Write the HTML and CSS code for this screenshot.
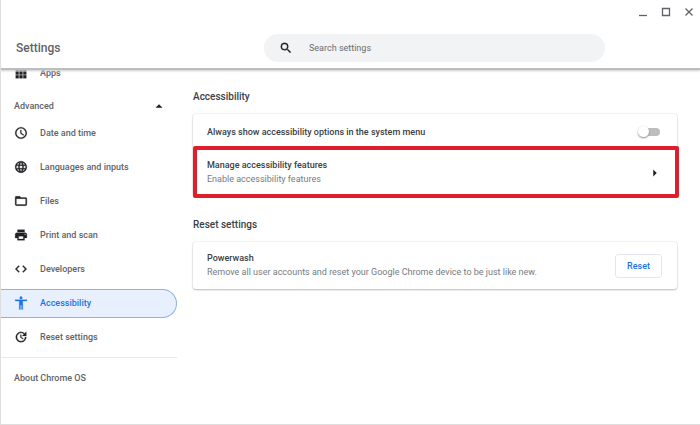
FILE: index.html
```html
<!DOCTYPE html>
<html lang="en">
<head>
<meta charset="utf-8">
<title>Settings</title>
<link rel="stylesheet" href="styles.css">
</head>
<body>
<div class="window">
  <header class="top">
    <div class="controls">
      <button type="button" aria-label="Minimize"><svg viewBox="0 0 10 10"><path d="M1 8.5h8"/></svg></button>
      <button type="button" aria-label="Maximize"><svg viewBox="0 0 10 10"><path d="M1.5 1.5h7v7h-7z"/></svg></button>
      <button type="button" aria-label="Close"><svg viewBox="0 0 10 10"><path d="M1.5 1.5l7 7M8.5 1.5l-7 7"/></svg></button>
    </div>
    <div class="toolbar">
      <h1>Settings</h1>
      <label class="search">
        <svg class="icon" viewBox="0 0 24 24"><path d="M15.5 14h-.79l-.28-.27A6.47 6.47 0 0 0 16 9.5 6.5 6.5 0 1 0 9.5 16c1.61 0 3.09-.59 4.23-1.57l.27.28v.79l5 4.99L20.49 19l-4.99-5zm-6 0a4.5 4.5 0 1 1 0-9 4.5 4.5 0 0 1 0 9z"/></svg>
        <input type="search" placeholder="Search settings" aria-label="Search settings">
      </label>
    </div>
  </header>
  <div class="content">
    <nav class="menu">
      <a class="item" href="#apps"><svg class="icon" viewBox="0 0 24 24"><path d="M3 3h5v5H3zM9.500 3h5v5h-5zM16 3h5v5h-5zM3 9.500h5v5H3zM9.500 9.500h5v5h-5zM16 9.500h5v5h-5zM3 16h5v5H3zM9.500 16h5v5h-5zM16 16h5v5h-5z"/></svg>Apps</a>
      <button class="advanced" type="button">Advanced<svg class="icon arrow" viewBox="0 0 24 24"><path d="M6 15l6-6 6 6z"/></svg></button>
      <a class="item" href="#date"><svg class="icon" viewBox="0 0 24 24"><path d="M12 2a10 10 0 1 0 0 20 10 10 0 0 0 0-20zm0 18a8 8 0 1 1 0-16 8 8 0 0 1 0 16zm.5-13H11v6l5.200 3.200.8-1.300-4.500-2.700z"/></svg>Date and time</a>
      <a class="item" href="#languages"><svg class="icon" viewBox="0 0 24 24"><path d="M11.990 2C6.470 2 2 6.480 2 12s4.470 10 9.990 10C17.520 22 22 17.520 22 12S17.520 2 11.990 2zm6.930 6h-2.950a15.650 15.650 0 0 0-1.380-3.560A8.030 8.030 0 0 1 18.920 8zM12 4.040c.83 1.200 1.480 2.530 1.910 3.960h-3.820c.43-1.430 1.080-2.760 1.910-3.960zM4.260 14C4.100 13.360 4 12.690 4 12s.1-1.360.26-2h3.380c-.08.66-.14 1.320-.14 2s.06 1.340.14 2H4.260zm.82 2h2.950c.32 1.250.78 2.450 1.380 3.560A7.990 7.990 0 0 1 5.080 16zm2.950-8H5.080a7.990 7.990 0 0 1 4.330-3.560A15.650 15.650 0 0 0 8.030 8zM12 19.960c-.83-1.200-1.480-2.530-1.910-3.960h3.820c-.43 1.430-1.080 2.760-1.910 3.960zM14.340 14H9.660c-.09-.66-.16-1.320-.16-2s.07-1.350.16-2h4.680c.09.650.16 1.320.16 2s-.07 1.340-.16 2zm.25 5.560c.6-1.110 1.060-2.310 1.380-3.560h2.950a8.030 8.030 0 0 1-4.330 3.560zM16.360 14c.08-.66.14-1.320.14-2s-.06-1.340-.14-2h3.380c.16.640.26 1.310.26 2s-.1 1.360-.26 2h-3.380z"/></svg>Languages and inputs</a>
      <a class="item" href="#files"><svg class="icon" viewBox="0 0 24 24"><path d="M20 6h-8l-2-2H4a2 2 0 0 0-2 2v12c0 1.100.9 2 2 2h16a2 2 0 0 0 2-2V8a2 2 0 0 0-2-2zm0 12H4V8h16v10z"/></svg>Files</a>
      <a class="item" href="#print"><svg class="icon" viewBox="0 0 24 24"><path d="M19 8H5a3 3 0 0 0-3 3v6h4v4h12v-4h4v-6a3 3 0 0 0-3-3zm-3 11H8v-5h8v5zm3-7a1 1 0 1 1 0-2 1 1 0 0 1 0 2zM18 3H6v4h12V3z"/></svg>Print and scan</a>
      <a class="item" href="#developers"><svg class="icon" viewBox="0 0 24 24"><path d="M9.400 16.600L4.800 12l4.600-4.600L8 6l-6 6 6 6 1.400-1.400zm5.200 0l4.600-4.600-4.600-4.600L16 6l6 6-6 6-1.400-1.400z"/></svg>Developers</a>
      <a class="item active" href="#accessibility" aria-current="page"><svg class="icon" viewBox="0 0 24 24"><path d="M12 1a2.200 2.200 0 1 1 0 4.400A2.200 2.200 0 0 1 12 1zm10 7.500h-7V23h-2v-7h-2v7H9V8.500H2v-2h20v2z"/></svg>Accessibility</a>
      <a class="item" href="#reset"><svg class="icon" viewBox="0 0 24 24"><path d="M21 10.120h-6.780l2.740-2.820a7 7 0 0 0-9.790-.1 6.875 6.875 0 0 0 0 9.790 7.020 7.020 0 0 0 9.790 0C18.320 15.650 19 14.080 19 12.100h2c0 1.980-.88 4.550-2.640 6.290a9.050 9.050 0 0 1-12.720 0 8.870 8.870 0 0 1-.02-12.600 8.980 8.980 0 0 1 12.650 0L21 3v7.120zM12.500 8v4.250l3.500 2.080-.72 1.210L11 13V8h1.500z"/></svg>Reset settings</a>
      <a class="about" href="#about">About Chrome OS</a>
    </nav>
    <main class="main">
      <section>
        <h2>Accessibility</h2>
        <div class="card">
          <label class="row toggle-row">
            <span class="title">Always show accessibility options in the system menu</span>
            <input class="toggle" type="checkbox" role="switch">
          </label>
          <a class="row highlighted" href="#manage">
            <span class="text"><span class="title">Manage accessibility features</span><span class="detail">Enable accessibility features</span></span>
            <svg class="icon arrow" viewBox="0 0 24 24"><path d="M9 6l6 6-6 6z"/></svg>
          </a>
        </div>
      </section>
      <section>
        <h2>Reset settings</h2>
        <div class="card">
          <div class="row">
            <span class="text"><span class="title">Powerwash</span><span class="detail">Remove all user accounts and reset your Google Chrome device to be just like new.</span></span>
            <button class="reset" type="button">Reset</button>
          </div>
        </div>
      </section>
    </main>
  </div>
</div>
</body>
</html>
```
FILE: styles.css
```css
* { box-sizing: border-box; }

body {
  margin: 0;
  background: #fff;
  color: #3c4043;
  font: 500 9px/14px Roboto, "Liberation Sans", sans-serif;
}

button, input { font: inherit; }
button { border: 0; padding: 0; background: none; }
a { color: inherit; text-decoration: none; }

.window {
  display: flex;
  flex-direction: column;
  height: 100vh;
  border-left: 1px solid #dedede;
  border-bottom: 1px solid #dedede;
  overflow: hidden;
}

.icon {
  flex: none;
  width: 14px;
  height: 14px;
  fill: #202124;
  stroke: #202124;
  stroke-width: 0.500;
}

.top {
  position: relative;
  z-index: 1;
  background: #fff;
  border-bottom: 2px solid #bdbdbd;
  box-shadow: 0 1px 2px #ccc;
}

.controls {
  display: flex;
  justify-content: flex-end;
  gap: 13px;
  padding: 7px 6px 0 0;
}

.controls button { width: 10px; height: 10px; }

.controls svg {
  display: block;
  width: 10px;
  height: 10px;
  fill: none;
  stroke: #5f6368;
  stroke-width: 1.300;
}

.toolbar {
  display: flex;
  align-items: center;
  padding: 17px 95px 6px 15px;
}

h1 {
  flex: 0 0 248px;
  margin: 0;
  color: #5f6368;
  font-size: 12px;
  font-weight: 500;
}

.search {
  display: flex;
  flex: 1;
  align-items: center;
  gap: 16px;
  height: 28px;
  padding: 0 15px;
  border-radius: 14px;
  background: #f1f3f4;
}

.search input {
  flex: 1;
  min-width: 0;
  border: 0;
  padding: 0;
  background: none;
  outline: 0;
  font-weight: 400;
}

.search input::placeholder { color: #6a6e73; opacity: 1; }

.content {
  display: flex;
  flex: 1;
  min-height: 0;
}

.menu {
  display: flex;
  flex: 0 0 176px;
  flex-direction: column;
  gap: 5px;
  margin-top: -11px;
  color: #5f6368;
}

.item {
  display: flex;
  flex: none;
  align-items: center;
  gap: 12px;
  height: 29px;
  padding: 0 0 2px 13px;
}

.active {
  border: 1px solid #8ab0ee;
  border-left: 0;
  border-radius: 0 15px 15px 0;
  background: #e8f0fe;
  color: #1a73e8;
}

.active .icon { fill: #1a73e8; stroke: #1a73e8; }

.advanced {
  display: flex;
  align-items: center;
  justify-content: space-between;
  height: 21px;
  padding: 4px 11px 0 13px;
  color: inherit;
}

.about {
  border-top: 1px solid #e8e8e8;
  padding: 13px;
}

.main {
  flex: 1;
  min-width: 0;
  padding: 20px 23px 0 16px;
}

section { margin-bottom: 22px; }

h2 {
  margin: 0 0 10px;
  font-size: 10px;
  font-weight: 500;
}

.card {
  border-radius: 3px;
  background: #fff;
  box-shadow: 0 1px 2px #bbb, 0 0 2px #ddd;
}

.row {
  display: flex;
  position: relative;
  align-items: center;
  justify-content: space-between;
  min-height: 47px;
  padding: 0 15px 0 14px;
}

.toggle-row { min-height: 35px; }

.text {
  display: flex;
  flex-direction: column;
  padding-bottom: 2px;
}

.title { color: #3c4043; }

.detail { color: #777b80; font-weight: 400; }

.highlighted::after {
  content: "";
  position: absolute;
  inset: -3px -2px -2px 0;
  border: 4px solid #dc1f2a;
  border-radius: 2px;
}

.arrow { stroke: none; }

.toggle {
  display: flex;
  align-items: center;
  appearance: none;
  width: 20px;
  height: 8px;
  margin: 0 2px 0 0;
  border-radius: 4px;
  background: #bdbdbd;
}

.toggle::before {
  content: "";
  width: 11px;
  height: 11px;
  margin-left: -2px;
  border-radius: 50%;
  background: #fff;
  box-shadow: 0 1px 2px #888;
}

.toggle:checked { background: #8ab4f8; }
.toggle:checked::before { margin-left: 11px; background: #1a73e8; }

.reset {
  height: 24px;
  padding: 0 11px;
  border: 1px solid #e4e8ee;
  border-radius: 3px;
  color: #1a73e8;
}
```
